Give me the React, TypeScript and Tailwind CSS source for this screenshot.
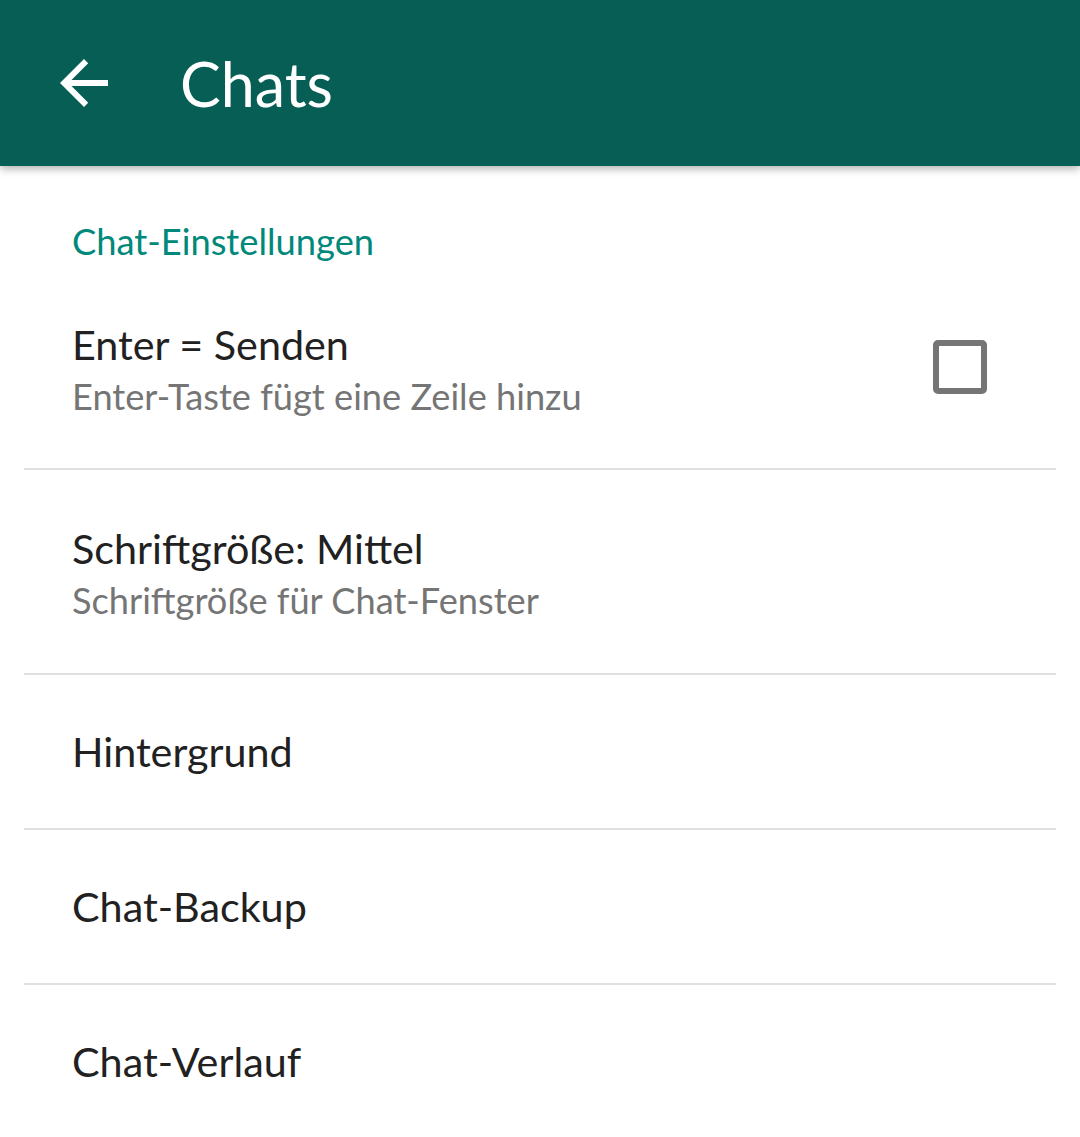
import { ReactNode } from 'react'

/* ── Material "arrow_back" glyph ── */
function BackArrow() {
  return (
    <svg width="72" height="72" viewBox="0 0 24 24" fill="#ffffff" aria-hidden>
      <path d="M20 11H7.83l5.59-5.59L12 4l-8 8 8 8 1.41-1.41L7.83 13H20v-2z" />
    </svg>
  )
}

function Checkbox() {
  return <div className="w-[54px] h-[54px] rounded-[5px] border-[6px] border-[#757575] bg-white" />
}

/* ── One preference row: title + optional summary ── */
function PrefRow({
  title,
  summary,
  trailing,
  last,
  top = 'pt-[52px] pb-[47px]',
}: {
  title: string
  summary?: string
  trailing?: ReactNode
  last?: boolean
  top?: string
}) {
  return (
    <div className={last ? '' : 'border-b-2 border-[#e0e0e0]'}>
      {summary ? (
        <div className={`flex items-center pl-[48px] pr-[69px] ${top}`}>
          <div className="flex-1">
            <div className="text-[41.3px] leading-[52px] text-[#212121]">{title}</div>
            <div className="text-[36.2px] leading-[52px] text-[#757575]">{summary}</div>
          </div>
          {trailing}
        </div>
      ) : (
        <div className="flex items-center h-[153px] pl-[48px]">
          <div className="text-[41.3px] leading-[53px] text-[#212121]">{title}</div>
        </div>
      )}
    </div>
  )
}

export default function App() {
  return (
    <div
      className="w-[1080px] h-[1137px] bg-white overflow-hidden"
      style={{ fontFamily: 'Lato, "Noto Sans", sans-serif' }}
    >
      {/* ── Toolbar ── */}
      <header className="relative z-10 flex items-center h-[166px] bg-[#075e54] pl-12 shadow-[0_3px_8px_rgba(0,0,0,0.3)]">
        <BackArrow />
        <h1 className="ml-[60px] text-[61px] leading-none text-white">Chats</h1>
      </header>

      {/* ── Section header ── */}
      <div className="pt-[51px] pl-[72px] text-[36.3px] leading-[48px] text-[#00897b]">
        Chat-Einstellungen
      </div>

      {/* ── Preference list ── */}
      <div className="mx-6 -mt-[1px]">
        <PrefRow
          title="Enter = Senden"
          summary="Enter-Taste fügt eine Zeile hinzu"
          top="pt-[54px] pb-[46px]"
          trailing={<div className="-mt-[6px]"><Checkbox /></div>}
        />
        <PrefRow title="Schriftgröße: Mittel" summary="Schriftgröße für Chat-Fenster" />
        <PrefRow title="Hintergrund" />
        <PrefRow title="Chat-Backup" />
        <PrefRow title="Chat-Verlauf" last />
      </div>
    </div>
  )
}
